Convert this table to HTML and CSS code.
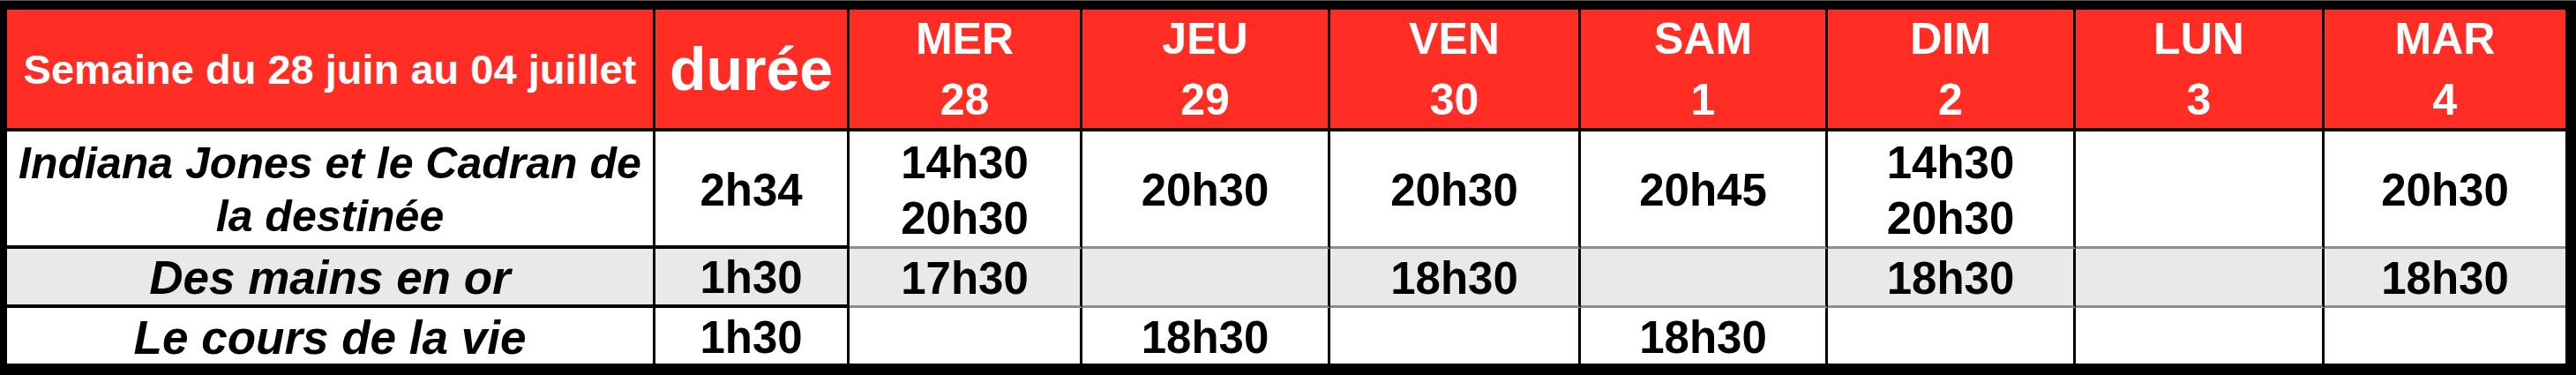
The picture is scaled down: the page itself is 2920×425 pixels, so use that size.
FILE: index.html
```html
<!DOCTYPE html>
<html lang="fr">
<head>
<meta charset="utf-8">
<title>Programme de la semaine</title>
<link rel="stylesheet" href="styles.css">
</head>
<body>
<div class="frame">
  <table class="schedule">
    <thead>
      <tr class="head-row">
        <th class="c-title week">Semaine du 28 juin au 04 juillet</th>
        <th class="c-dur duree-h">durée</th>
        <th class="c-mer day"><span>MER</span><span class="num">28</span></th>
        <th class="c-jeu day"><span>JEU</span><span class="num">29</span></th>
        <th class="c-ven day"><span>VEN</span><span class="num">30</span></th>
        <th class="c-sam day"><span>SAM</span><span class="num">1</span></th>
        <th class="c-dim day"><span>DIM</span><span class="num">2</span></th>
        <th class="c-lun day"><span>LUN</span><span class="num">3</span></th>
        <th class="c-mar day last"><span>MAR</span><span class="num">4</span></th>
      </tr>
    </thead>
    <tbody>
      <tr class="row-tall">
        <td class="title long"><span>Indiana Jones et le Cadran de</span><span>la destinée</span></td>
        <td class="dur">2h34</td>
        <td class="slot"><span>14h30</span><span>20h30</span></td>
        <td class="slot">20h30</td>
        <td class="slot">20h30</td>
        <td class="slot">20h45</td>
        <td class="slot"><span>14h30</span><span>20h30</span></td>
        <td class="slot"></td>
        <td class="slot last">20h30</td>
      </tr>
      <tr class="row-short alt">
        <td class="title">Des mains en or</td>
        <td class="dur">1h30</td>
        <td class="slot">17h30</td>
        <td class="slot"></td>
        <td class="slot">18h30</td>
        <td class="slot"></td>
        <td class="slot">18h30</td>
        <td class="slot"></td>
        <td class="slot last">18h30</td>
      </tr>
      <tr class="row-short end">
        <td class="title">Le cours de la vie</td>
        <td class="dur">1h30</td>
        <td class="slot"></td>
        <td class="slot">18h30</td>
        <td class="slot"></td>
        <td class="slot">18h30</td>
        <td class="slot"></td>
        <td class="slot"></td>
        <td class="slot last"></td>
      </tr>
    </tbody>
  </table>
</div>
</body>
</html>
```

FILE: styles.css
```css
html, body {
  margin: 0;
  padding: 0;
  background: #000;
}

.frame {
  width: 2920px;
  height: 425px;
  box-sizing: border-box;
  background: #000;
  border-top: 1px solid #5a5a5e;
  padding: 10px 12px 13px 8px;
}

.schedule {
  width: 2900px;
  border-collapse: separate;
  border-spacing: 0;
  table-layout: fixed;
  font-family: "Liberation Sans", Arial, Helvetica, sans-serif;
  font-weight: bold;
}

.schedule th,
.schedule td {
  box-sizing: border-box;
  padding: 0;
  text-align: center;
  vertical-align: middle;
  border-right: 3px solid #000;
  overflow: hidden;
  white-space: nowrap;
}

.schedule .last {
  border-right: 0;
}

/* column widths */
.c-title { width: 735px; }
.c-dur { width: 220px; }
.c-mer { width: 264px; }
.c-jeu { width: 281px; }
.c-ven { width: 284px; }
.c-sam { width: 280px; }
.c-dim { width: 281px; }
.c-lun { width: 282px; }
.c-mar { width: 273px; }

/* header */
.head-row th {
  height: 138px;
  background: #ff2d24;
  color: #fff;
  border-bottom: 4px solid #000;
}

.week {
  font-size: 47px;
  padding-top: 9px;
}

.duree-h {
  font-size: 68px;
  padding-top: 12px;
}

.day {
  font-size: 50px;
  line-height: 62px;
  padding-top: 3px;
}

.day .num {
  margin-top: 7px;
}

.day span,
.title span,
.slot span {
  display: block;
}

/* body rows */
.row-tall td {
  height: 133px;
  background: #fff;
  border-bottom: 4px solid #000;
}

.row-short td {
  height: 67px;
  background: #fff;
  border-bottom: 4px solid #000;
  padding-top: 3px;
}

.row-short.end td {
  height: 63px;
  border-bottom: 0;
  padding-top: 5px;
}

.row-short.alt td {
  background: #e9e9e9;
}

.row-tall .slot,
.row-short.alt .slot {
  border-bottom: 3px solid #8c8c8c;
}

.title {
  font-style: italic;
  font-size: 53px;
  color: #000;
  line-height: 60px;
}

.title.long {
  font-size: 50px;
  padding-top: 3px;
}

.dur,
.slot {
  font-size: 51px;
  color: #000;
  line-height: 60px;
}

.row-short.end .title,
.row-short.end .dur,
.row-short.end .slot {
  line-height: 58px;
}

.row-tall .dur,
.row-tall .slot {
  padding-top: 3px;
  line-height: 63px;
}
```
